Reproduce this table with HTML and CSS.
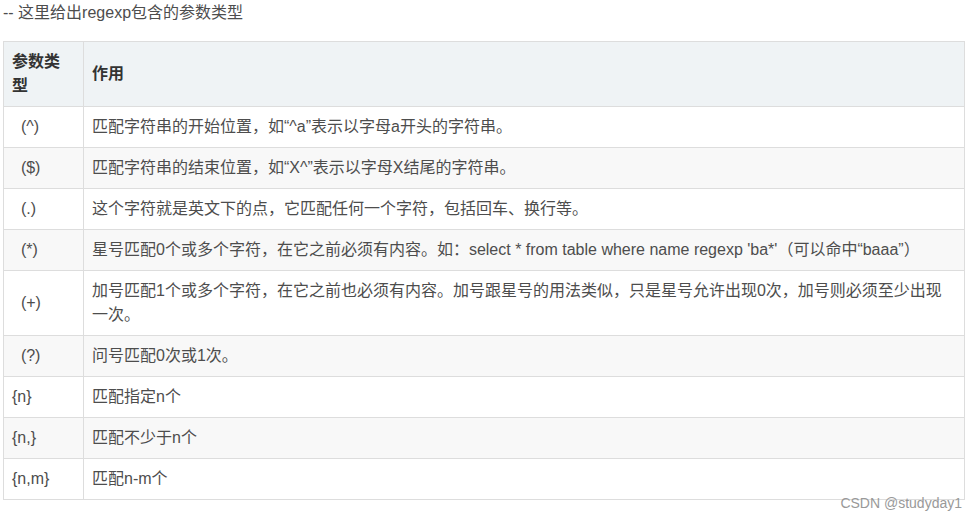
FILE: index.html
```html
<!DOCTYPE html>
<html lang="zh-CN">
<head>
<meta charset="utf-8">
<title>regexp 参数类型</title>
<link rel="stylesheet" href="styles.css">
</head>
<body>
<div class="page">
  <p class="intro">-- 这里给出regexp包含的参数类型</p>
  <table class="params">
    <colgroup>
      <col class="col-type">
      <col class="col-desc">
    </colgroup>
    <thead>
      <tr><th>参数类型</th><th>作用</th></tr>
    </thead>
    <tbody>
      <tr><td>&nbsp;&nbsp;(^)</td><td>匹配字符串的开始位置，如“^a”表示以字母a开头的字符串。</td></tr>
      <tr><td>&nbsp;&nbsp;($)</td><td>匹配字符串的结束位置，如“X^”表示以字母X结尾的字符串。</td></tr>
      <tr><td>&nbsp;&nbsp;(.)</td><td>这个字符就是英文下的点，它匹配任何一个字符，包括回车、换行等。</td></tr>
      <tr><td>&nbsp;&nbsp;(*)</td><td>星号匹配0个或多个字符，在它之前必须有内容。如：select * from table where name regexp 'ba*'（可以命中“baaa”）</td></tr>
      <tr><td>&nbsp;&nbsp;(+)</td><td>加号匹配1个或多个字符，在它之前也必须有内容。加号跟星号的用法类似，只是星号允许出现0次，加号则必须至少出现一次。</td></tr>
      <tr><td>&nbsp;&nbsp;(?)</td><td>问号匹配0次或1次。</td></tr>
      <tr><td>{n}</td><td>匹配指定n个</td></tr>
      <tr><td>{n,}</td><td>匹配不少于n个</td></tr>
      <tr><td>{n,m}</td><td>匹配n-m个</td></tr>
    </tbody>
  </table>
  <div class="watermark">CSDN @studyday1</div>
</div>
</body>
</html>
```

FILE: styles.css
```css
html, body {
  margin: 0;
  padding: 0;
  background: #ffffff;
}

.page {
  position: relative;
  width: 977px;
  height: 521px;
  padding-left: 3px;
  box-sizing: border-box;
  font-family: "Liberation Sans", "Noto Sans CJK SC", sans-serif;
  font-size: 16px;
  color: #4d4d4d;
}

.intro {
  margin: 0;
  line-height: 26px;
  height: 26px;
  margin-bottom: 15px;
}

.params {
  border-collapse: collapse;
  table-layout: fixed;
  width: 962px;
}

.col-type {
  width: 80px;
}

.params th,
.params td {
  border: 1px solid #dddddd;
  padding: 8px;
  line-height: 24px;
  text-align: left;
  vertical-align: middle;
}

.params th {
  background: #eff3f5;
  color: #333333;
  font-weight: bold;
}

.params tbody tr:nth-child(2n) {
  background: #f8f8f8;
}

.watermark {
  position: absolute;
  right: 15px;
  top: 495px;
  font-size: 14px;
  line-height: 16px;
  color: #999999;
}
```
